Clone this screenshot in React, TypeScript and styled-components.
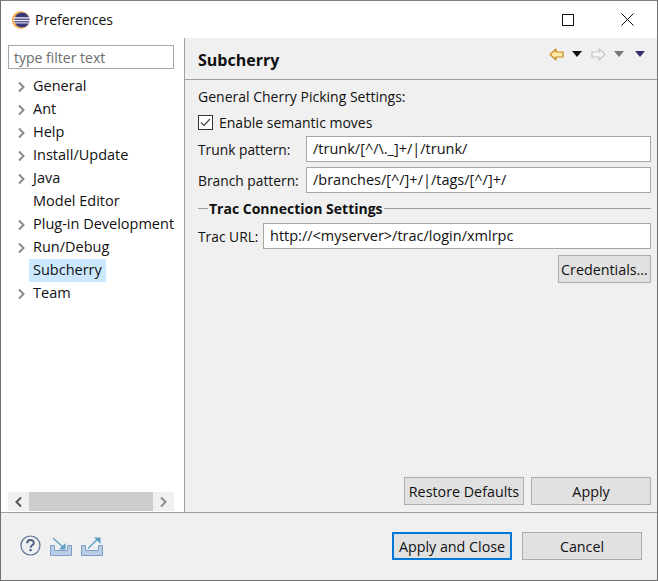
import React from "react";
import styled, { createGlobalStyle } from "styled-components";

const GlobalStyle = createGlobalStyle`
  html, body { margin: 0; padding: 0; background: #fff; }
  body { font-family: "Open Sans", "Noto Sans", sans-serif; font-size: 14px; color: #111; }
`;

const Window = styled.div`
  width: 658px;
  height: 581px;
  box-sizing: border-box;
  border: 1px solid #707070;
  border-top-color: #808080;
  display: flex;
  flex-direction: column;
  background: #fff;
  overflow: hidden;
`;

const TitleBar = styled.div`
  height: 37px;
  flex: none;
  display: flex;
  align-items: center;
  padding-left: 11px;
`;

const TitleText = styled.div`
  flex: 1;
  font-size: 14px;
  margin-left: 5px;
`;

const WinButton = styled.div<{ $width: number }>`
  width: ${(p) => p.$width}px;
  height: 37px;
  display: flex;
  align-items: center;
  justify-content: center;
`;

const Main = styled.div`
  flex: 1;
  display: flex;
  min-height: 0;
  border-bottom: 1px solid #a0a0a0;
`;

const Sidebar = styled.div`
  width: 184px;
  flex: none;
  box-sizing: border-box;
  border-right: 1px solid #a0a0a0;
  display: flex;
  flex-direction: column;
  padding: 7px 0 0 7px;
`;

const Filter = styled.div`
  width: 166px;
  height: 24px;
  box-sizing: border-box;
  border: 1px solid #a6a6a6;
  color: #6d6d6d;
  padding-left: 5px;
  line-height: 24px;
  flex: none;
`;

const Tree = styled.div`
  flex: 1;
  padding-top: 6px;
`;

const TreeRow = styled.div`
  height: 23px;
  display: flex;
  align-items: center;
`;

const Twisty = styled.div`
  width: 21px;
  height: 23px;
  flex: none;
  display: flex;
  align-items: center;
  justify-content: center;
  padding-left: 5px;
  box-sizing: border-box;
`;

const TreeLabel = styled.div<{ $selected?: boolean }>`
  padding: 0 4px;
  height: 23px;
  line-height: 22px;
  font-size: 14.5px;
  white-space: nowrap;
  background: ${(p) => (p.$selected ? "#cce8ff" : "transparent")};
`;

const HScroll = styled.div`
  height: 19px;
  width: 166px;
  margin-bottom: 1px;
  display: flex;
  align-items: center;
  background: #f0f0f0;
  flex: none;
`;

const ScrollArrow = styled.div`
  width: 21px;
  flex: none;
  height: 19px;
  display: flex;
  align-items: center;
  justify-content: center;
`;

const ScrollThumb = styled.div`
  flex: 1;
  height: 19px;
  background: #cdcdcd;
`;

const Content = styled.div`
  flex: 1;
  background: #f0f0f0;
  display: flex;
  flex-direction: column;
  min-width: 0;
`;

const PageHeader = styled.div`
  height: 42px;
  flex: none;
  box-sizing: border-box;
  border-bottom: 1px solid #a0a0a0;
  display: flex;
  align-items: center;
  padding: 0 12px 0 13px;
`;

const PageTitle = styled.div`
  flex: 1;
  font-size: 16px;
  font-weight: 700;
  padding-top: 3px;
`;

const NavIcons = styled.div`
  display: flex;
  align-items: center;
  margin-top: -9px;
`;

const NavGap = styled.span<{ $width: number }>`
  width: ${(p) => p.$width}px;
`;

const Body = styled.div`
  flex: 1;
  padding: 7px 6px 0 13px;
  display: flex;
  flex-direction: column;
`;

const Line = styled.div`
  height: 20px;
  line-height: 20px;
  white-space: nowrap;
`;

const CheckRow = styled.div`
  display: flex;
  align-items: center;
  gap: 6px;
  height: 20px;
  margin-top: 5px;
`;

const CheckBox = styled.div`
  width: 15px;
  height: 15px;
  box-sizing: border-box;
  border: 1px solid #333;
  background: #fff;
  display: flex;
  align-items: center;
  justify-content: center;
`;

const FieldRow = styled.div<{ $top: number }>`
  display: flex;
  align-items: center;
  margin-top: ${(p) => p.$top}px;
`;

const FieldLabel = styled.div<{ $width: number }>`
  width: ${(p) => p.$width}px;
  flex: none;
  white-space: nowrap;
  font-size: 13.8px;
`;

const TextBox = styled.div`
  flex: 1;
  height: 26px;
  box-sizing: border-box;
  border: 1px solid #a6a6a6;
  background: #fff;
  line-height: 24px;
  padding-left: 6px;
  font-size: 14.5px;
  white-space: nowrap;
  overflow: hidden;
`;

const GroupHeading = styled.div`
  display: flex;
  align-items: center;
  gap: 1px;
  margin-top: 5px;
  height: 20px;
  font-weight: 700;
  font-size: 14px;
`;

const GroupRule = styled.div<{ $grow?: boolean }>`
  height: 1px;
  background: #a0a0a0;
  width: 10px;
  flex: ${(p) => (p.$grow ? 1 : "none")};
`;

const Spacer = styled.div`
  flex: 1;
`;

const RightButtons = styled.div`
  display: flex;
  justify-content: flex-end;
  gap: 7px;
`;

const Button = styled.div<{ $width: number; $default?: boolean }>`
  width: ${(p) => p.$width}px;
  height: 28px;
  box-sizing: border-box;
  background: #e1e1e1;
  border: ${(p) => (p.$default ? "2px solid #0078d7" : "1px solid #adadad")};
  display: flex;
  align-items: center;
  justify-content: center;
  white-space: nowrap;
  font-size: 14.3px;
`;

const CredentialsRow = styled(RightButtons)`
  margin-top: 6px;
`;

const ApplyRow = styled(RightButtons)`
  margin-bottom: 7px;
`;

const Footer = styled.div`
  height: 67px;
  flex: none;
  background: #f0f0f0;
  display: flex;
  align-items: center;
  padding: 0 15px 0 19px;
`;

const FooterIcons = styled.div`
  flex: 1;
  display: flex;
  align-items: center;
  gap: 9px;
  margin-top: -2px;
`;

const FooterButtons = styled.div`
  display: flex;
  gap: 10px;
  margin-top: -1px;
`;

const Chevron = ({ left }: { left?: boolean }) => (
  <svg width="9" height="12" viewBox="0 0 9 12" fill="none">
    <path d={left ? "M7 1.5 2.5 6 7 10.5" : "M2 1.5 6.5 6 2 10.5"} stroke={left ? "#555" : "#8a8a8a"} strokeWidth="2" />
  </svg>
);

const EclipseLogo = () => (
  <svg width="18" height="18" viewBox="0 0 18 18">
    <defs>
      <linearGradient id="ecl" x1="0" y1="0" x2="1" y2="0">
        <stop offset="0" stopColor="#f29a2e" />
        <stop offset="1" stopColor="#f7d9a8" />
      </linearGradient>
    </defs>
    <circle cx="9" cy="9" r="9" fill="url(#ecl)" />
    <circle cx="10" cy="9" r="7.6" fill="#3a3878" />
    <rect x="1.5" y="6.2" width="16" height="1.4" fill="#ecebf5" />
    <rect x="1" y="8.8" width="17" height="1.4" fill="#ecebf5" />
    <rect x="2" y="11.3" width="15" height="1.2" fill="#d8d8e8" />
  </svg>
);

const Dropdown = ({ color }: { color: string }) => (
  <svg width="10" height="6" viewBox="0 0 10 6">
    <path d="M0 0h10L5 6z" fill={color} />
  </svg>
);

const NavArrow = ({ right, active }: { right?: boolean; active?: boolean }) => (
  <svg width="15" height="13" viewBox="0 0 15 13" style={right ? { transform: "scaleX(-1)" } : undefined}>
    <path
      d="M1 6.5 7 1v3h7v5H7v3z"
      fill={active ? "#fde9a8" : "#f6f6f6"}
      stroke={active ? "#c98a1e" : "#c4c4c4"}
      strokeWidth="1.2"
      strokeLinejoin="round"
    />
  </svg>
);

const HelpIcon = () => (
  <svg width="21" height="21" viewBox="0 0 21 21" fill="none">
    <circle cx="10.5" cy="10.5" r="9.5" stroke="#5c6f96" strokeWidth="1.2" />
    <path d="M7.2 8.2c0-4.2 6.6-4.2 6.6-.3 0 2.4-3.2 2.4-3.2 4.8" stroke="#4e5f85" strokeWidth="2" />
    <rect x="9.5" y="14" width="2.2" height="2.2" fill="#4e5f85" />
  </svg>
);

const TrayIcon = ({ out }: { out?: boolean }) => (
  <svg width="22" height="20" viewBox="0 0 22 20" fill="none">
    <path d="M.5 9.5h4v5h13v-5h4v10H.5z" fill="#b9cde6" stroke="#7f9cc8" />
    <path d={out ? "M7 12.5 16 3.5" : "M3 2l10 9"} stroke="#5b9ec4" strokeWidth="1.3" />
    <path d={out ? "M13 1.5h6.5V8z" : "M15.5 7v6.5H9z"} fill="#5b9ec4" />
  </svg>
);

const items: { label: string; leaf?: boolean; selected?: boolean }[] = [
  { label: "General" },
  { label: "Ant" },
  { label: "Help" },
  { label: "Install/Update" },
  { label: "Java" },
  { label: "Model Editor", leaf: true },
  { label: "Plug-in Development" },
  { label: "Run/Debug" },
  { label: "Subcherry", leaf: true, selected: true },
  { label: "Team" },
];

export default function App() {
  return (
    <>
      <GlobalStyle />
      <Window>
        <TitleBar>
          <EclipseLogo />
          <TitleText>Preferences</TitleText>
          <WinButton $width={58}>
            <svg width="12" height="12" viewBox="0 0 12 12" fill="none">
              <rect x="0.5" y="0.5" width="11" height="11" stroke="#111" />
            </svg>
          </WinButton>
          <WinButton $width={60}>
            <svg width="13" height="13" viewBox="0 0 13 13" fill="none">
              <path d="M.5.5l12 12M12.5.5l-12 12" stroke="#111" />
            </svg>
          </WinButton>
        </TitleBar>
        <Main>
          <Sidebar>
            <Filter>type filter text</Filter>
            <Tree>
              {items.map((item) => (
                <TreeRow key={item.label}>
                  <Twisty>{!item.leaf && <Chevron />}</Twisty>
                  <TreeLabel $selected={item.selected}>{item.label}</TreeLabel>
                </TreeRow>
              ))}
            </Tree>
            <HScroll>
              <ScrollArrow>
                <Chevron left />
              </ScrollArrow>
              <ScrollThumb />
              <ScrollArrow>
                <Chevron left={false} />
              </ScrollArrow>
            </HScroll>
          </Sidebar>
          <Content>
            <PageHeader>
              <PageTitle>Subcherry</PageTitle>
              <NavIcons>
                <NavArrow active />
                <NavGap $width={8} />
                <Dropdown color="#111" />
                <NavGap $width={9} />
                <NavArrow right />
                <NavGap $width={8} />
                <Dropdown color="#777" />
                <NavGap $width={11} />
                <Dropdown color="#3a2a6a" />
              </NavIcons>
            </PageHeader>
            <Body>
              <Line>General Cherry Picking Settings:</Line>
              <CheckRow>
                <CheckBox>
                  <svg width="11" height="9" viewBox="0 0 11 9" fill="none">
                    <path d="M1 4.5 4 7.5 10 1" stroke="#444" strokeWidth="1.2" />
                  </svg>
                </CheckBox>
                <span>Enable semantic moves</span>
              </CheckRow>
              <FieldRow $top={4}>
                <FieldLabel $width={108}>Trunk pattern:</FieldLabel>
                <TextBox>/trunk/[^/\._]+/|/trunk/</TextBox>
              </FieldRow>
              <FieldRow $top={5}>
                <FieldLabel $width={108}>Branch pattern:</FieldLabel>
                <TextBox>/branches/[^/]+/|/tags/[^/]+/</TextBox>
              </FieldRow>
              <GroupHeading>
                <GroupRule />
                Trac Connection Settings
                <GroupRule $grow />
              </GroupHeading>
              <FieldRow $top={5}>
                <FieldLabel $width={65}>Trac URL:</FieldLabel>
                <TextBox>http://&lt;myserver&gt;/trac/login/xmlrpc</TextBox>
              </FieldRow>
              <CredentialsRow>
                <Button $width={93}>Credentials...</Button>
              </CredentialsRow>
              <Spacer />
              <ApplyRow>
                <Button $width={120}>Restore Defaults</Button>
                <Button $width={120}>Apply</Button>
              </ApplyRow>
            </Body>
          </Content>
        </Main>
        <Footer>
          <FooterIcons>
            <HelpIcon />
            <TrayIcon />
            <TrayIcon out />
          </FooterIcons>
          <FooterButtons>
            <Button $width={120} $default>Apply and Close</Button>
            <Button $width={120}>Cancel</Button>
          </FooterButtons>
        </Footer>
      </Window>
    </>
  );
}
